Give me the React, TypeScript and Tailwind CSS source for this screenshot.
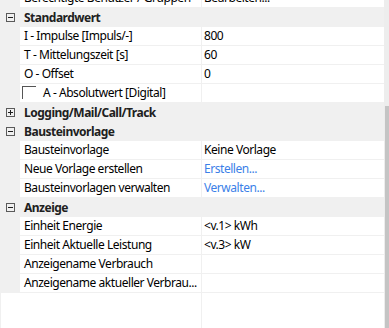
import React from "react";

type Row =
  | { kind: "cat"; label: string; open: boolean }
  | { kind: "prop"; label: string; value?: string; link?: boolean; sub?: boolean };

const rows: Row[] = [
  { kind: "prop", label: "Berechtigte Benutzer / Gruppen", value: "Bearbeiten..." },
  { kind: "cat", label: "Standardwert", open: true },
  { kind: "prop", label: "I - Impulse [Impuls/-]", value: "800" },
  { kind: "prop", label: "T - Mittelungszeit [s]", value: "60" },
  { kind: "prop", label: "O - Offset", value: "0" },
  { kind: "prop", label: "A - Absolutwert [Digital]", sub: true },
  { kind: "cat", label: "Logging/Mail/Call/Track", open: false },
  { kind: "cat", label: "Bausteinvorlage", open: true },
  { kind: "prop", label: "Bausteinvorlage", value: "Keine Vorlage" },
  { kind: "prop", label: "Neue Vorlage erstellen", value: "Erstellen...", link: true },
  { kind: "prop", label: "Bausteinvorlagen verwalten", value: "Verwalten...", link: true },
  { kind: "cat", label: "Anzeige", open: true },
  { kind: "prop", label: "Einheit Energie", value: "<v.1> kWh" },
  { kind: "prop", label: "Einheit Aktuelle Leistung", value: "<v.3> kW" },
  { kind: "prop", label: "Anzeigename Verbrauch" },
  { kind: "prop", label: "Anzeigename aktueller Verbrau..." },
];

function Expander({ open }: { open: boolean }) {
  return (
    <svg width="9" height="9" viewBox="0 0 9 9" className="shrink-0">
      <rect x="0.5" y="0.5" width="8" height="8" fill="none" stroke="#5a5a5a" />
      <line x1="2" y1="4.5" x2="7" y2="4.5" stroke="#1e1e1e" />
      {!open && <line x1="4.5" y1="2" x2="4.5" y2="7" stroke="#1e1e1e" />}
    </svg>
  );
}

function CategoryRow({ label, open }: { label: string; open: boolean }) {
  return (
    <div className="flex h-[19px] items-center bg-[#f0f0f0]">
      <div className="ml-[6px]">
        <Expander open={open} />
      </div>
      <span className="ml-[9px] font-bold tracking-[-0.5px] text-[#202020]">{label}</span>
    </div>
  );
}

function PropRow({ label, value, link, sub }: { label: string; value?: string; link?: boolean; sub?: boolean }) {
  return (
    <div className="flex h-[19px]">
      <div className="w-[20px] shrink-0 bg-[#f0f0f0]" />
      <div className="flex flex-1 border-b border-[#f0f0f0] bg-white">
        <div className="flex h-[18px] w-[182px] shrink-0 items-center overflow-hidden whitespace-nowrap border-r border-[#f0f0f0] pl-[4px]">
          {sub ? (
            <>
              <div className="ml-[-2px] mt-[2px] h-[13px] w-[14px] shrink-0 self-start border-l border-t border-[#555]" />
              <span className="ml-[7px]">{label}</span>
            </>
          ) : (
            <span>{label}</span>
          )}
        </div>
        <div className="flex h-[18px] flex-1 items-center overflow-hidden whitespace-nowrap pl-[2px]">
          {value && <span className={link ? "text-[#3c7fe8]" : ""}>{value}</span>}
        </div>
      </div>
    </div>
  );
}

export default function App() {
  return (
    <div
      className="flex h-[328px] w-[389px] overflow-hidden bg-white text-[12px] leading-[18px] tracking-[-0.45px] text-black"
      style={{ fontFamily: '"Noto Sans", "Open Sans", sans-serif' }}
    >
      <div className="flex w-[384px] shrink-0 flex-col">
        <div className="mt-[-11px] flex flex-col">
          {rows.map((r, i) =>
            r.kind === "cat" ? (
              <CategoryRow key={i} label={r.label} open={r.open} />
            ) : (
              <PropRow key={i} label={r.label} value={r.value} link={r.link} sub={r.sub} />
            )
          )}
        </div>
        <div className="flex flex-1">
          <div className="w-px bg-[#f0f0f0]" />
          <div className="w-[201px] border-r border-[#f0f0f0]" />
          <div className="flex-1" />
        </div>
      </div>
      <div className="flex w-[5px] flex-col bg-[#ededed]">
        <div className="h-[106px]" />
        <div className="ml-px flex-1 bg-[#c4c4c4]" />
      </div>
    </div>
  );
}
